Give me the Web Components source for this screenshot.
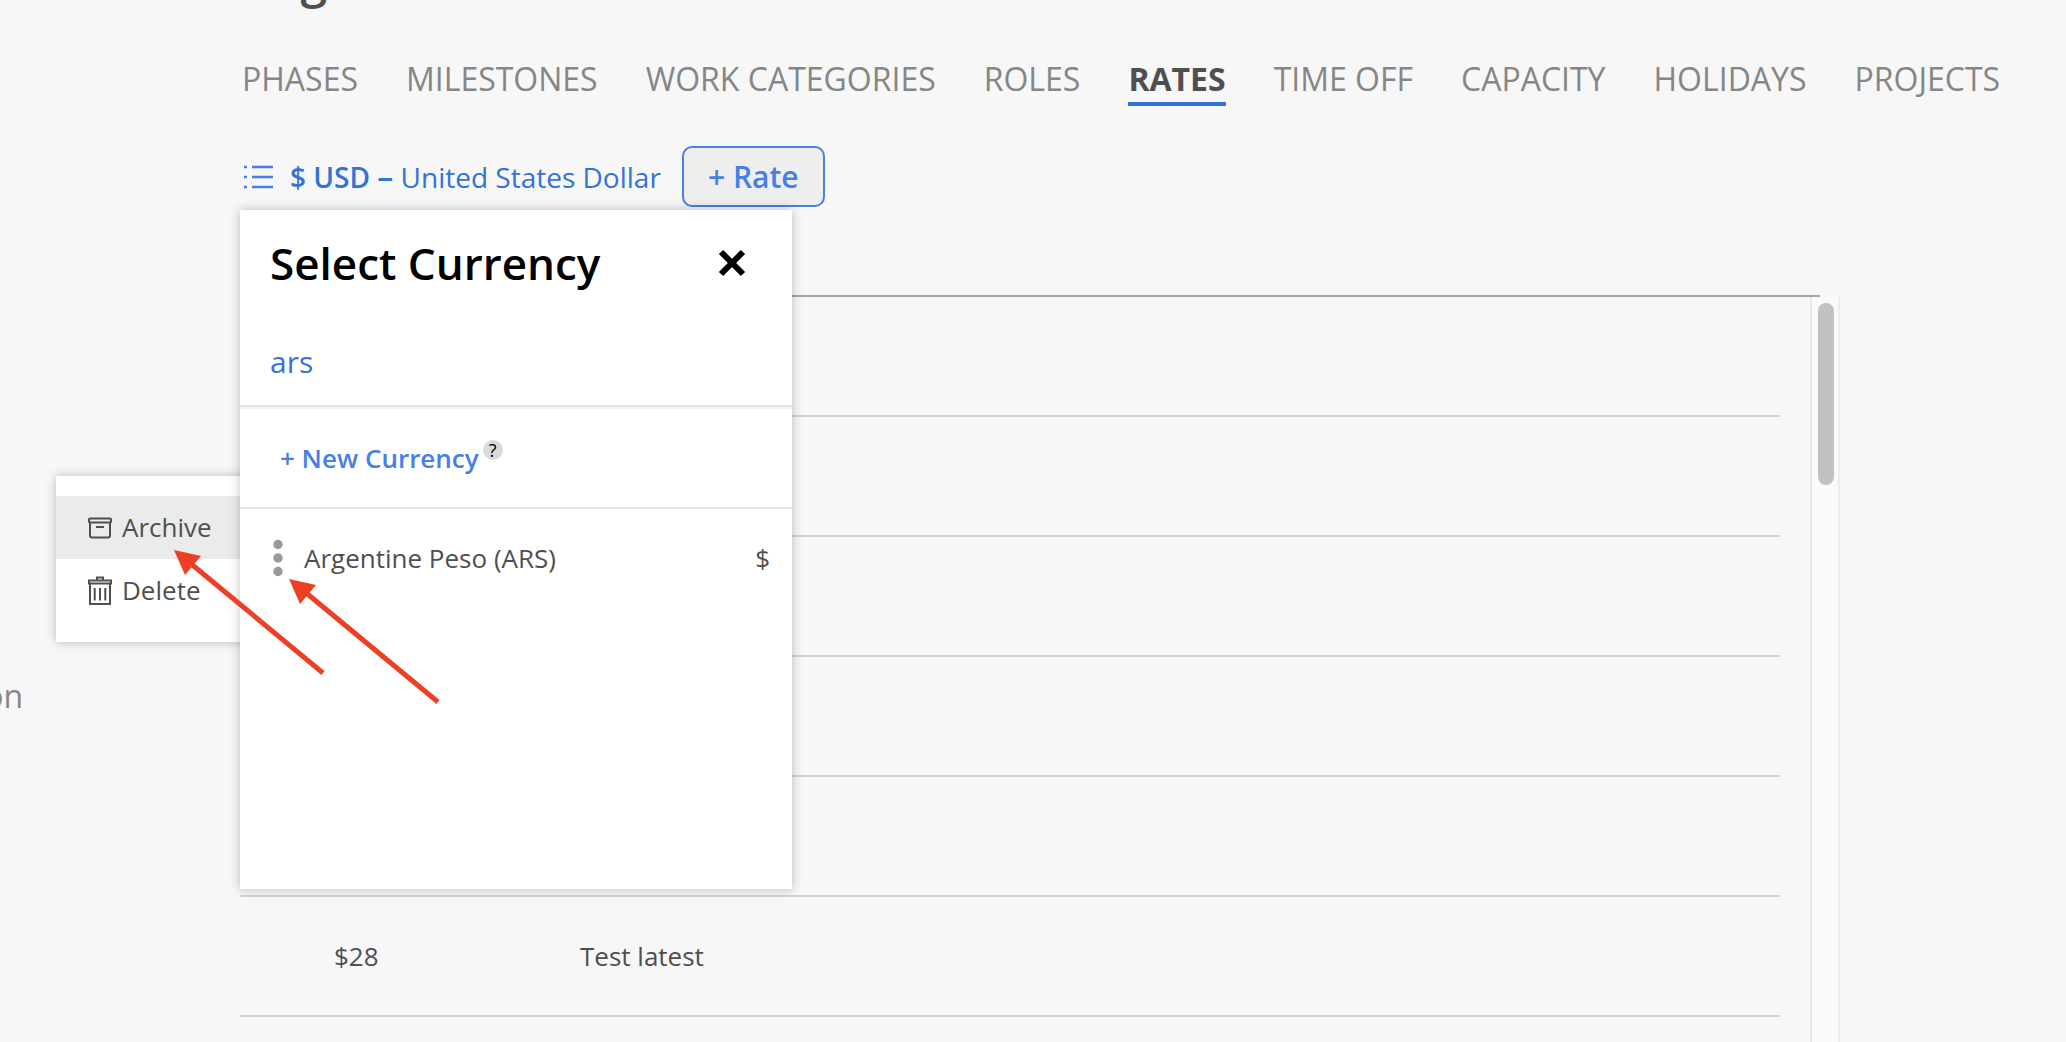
<!DOCTYPE html>
<html lang="en">
<head>
<meta charset="utf-8">
<title>Rates</title>
<style>
  body {
    margin: 0;
    background: #f7f7f7;
    color: #4f4f4f;
    font-family: "Open Sans", "Noto Sans", sans-serif;
    font-size: 26px;
    line-height: 36px;
  }
</style>
</head>
<body>
<rates-page></rates-page>

<script>
class TabNav extends HTMLElement {
  constructor() {
    super();
    this.attachShadow({ mode: 'open' });
  }

  connectedCallback() {
    const active = this.getAttribute('active');
    const tabs = this.getAttribute('tabs').split(',');

    this.shadowRoot.innerHTML = `
      <style>
        :host { display: block; }
        nav {
          display: flex;
          gap: 48px;
          white-space: nowrap;
        }
        a {
          color: #868686;
          font-size: 32px;
          line-height: 44px;
          padding-bottom: 1px;
          border-bottom: 4px solid transparent;
          text-decoration: none;
        }
        a[aria-current] {
          color: #4f4f4f;
          font-weight: 700;
          border-color: #3273d6;
        }
      </style>
      <nav>
        ${tabs.map((tab) => `<a href="#"${tab === active ? ' aria-current="page"' : ''}>${tab}</a>`).join('')}
      </nav>
    `;
  }
}

class RateTable extends HTMLElement {
  constructor() {
    super();
    this.attachShadow({ mode: 'open' });
  }

  connectedCallback() {
    const rows = [['', ''], ['', ''], ['', ''], ['', ''], ['', ''], ['$28', 'Test latest'], ['', '']];

    this.shadowRoot.innerHTML = `
      <style>
        :host { display: block; }
        .line {
          height: 2px;
          margin-right: 20px;
          background: #a5a5a5;
        }
        .body { display: flex; }
        .rows {
          flex: 1;
          padding-right: 30px;
        }
        table {
          width: 100%;
          border-collapse: separate;
          border-spacing: 0;
          table-layout: fixed;
        }
        td {
          box-sizing: border-box;
          height: 120px;
          padding: 0;
          border-bottom: 2px solid #d3d3d3;
        }
        .rate {
          width: 340px;
          padding-left: 94px;
        }
        .track {
          box-sizing: border-box;
          width: 30px;
          padding: 6px;
          background: #fafafa;
          border-left: 2px solid #e8e8e8;
          border-right: 2px solid #ededed;
        }
        .thumb {
          width: 16px;
          height: 182px;
          border-radius: 8px;
          background: #c1c1c1;
        }
      </style>
      <div class="line"></div>
      <div class="body">
        <div class="rows">
          <table>
            ${rows.map(([rate, name]) => `<tr><td class="rate">${rate}</td><td>${name}</td></tr>`).join('')}
          </table>
        </div>
        <div class="track"><div class="thumb"></div></div>
      </div>
    `;
  }
}

class CurrencyMenu extends HTMLElement {
  constructor() {
    super();
    this.attachShadow({ mode: 'open' });
    this.shadowRoot.innerHTML = `
      <style>
        :host {
          display: block;
          box-sizing: border-box;
          padding: 20px 0;
          background: #fff;
          box-shadow: 0 0 10px rgba(0, 0, 0, 0.25);
        }
        button {
          display: flex;
          align-items: center;
          gap: 10px;
          width: 100%;
          height: 63px;
          padding: 0 32px 2px;
          border: 0;
          background: none;
          color: inherit;
          font: inherit;
        }
        button.selected { background: #ebebeb; }
      </style>
      <button class="selected">
        <svg width="24" height="30" viewBox="0 0 24 30" fill="none" stroke="#4f4f4f" stroke-width="2">
          <rect x="1" y="6.500" width="22" height="4" rx="1"/>
          <path d="M2 10.500v13q0 2 2 2h16q2 0 2-2v-13M8 15h8"/>
        </svg>
        Archive
      </button>
      <button>
        <svg width="24" height="30" viewBox="0 0 24 30" fill="none" stroke="#4f4f4f" stroke-width="2">
          <path d="M9 5.500v-3h6v3"/>
          <rect x="1" y="5.500" width="22" height="3"/>
          <path d="M2 8.500V29h20V8.500M6.700 13v12.500M12 13v12.500M17.300 13v12.500"/>
        </svg>
        Delete
      </button>
    `;
  }
}

class CurrencyPicker extends HTMLElement {
  constructor() {
    super();
    this.attachShadow({ mode: 'open' });
    this.shadowRoot.innerHTML = `
      <style>
        :host {
          display: block;
          box-sizing: border-box;
          background: #fff;
          box-shadow: 0 0 10px rgba(0, 0, 0, 0.25);
        }
        header {
          display: flex;
          align-items: center;
          justify-content: space-between;
          padding: 23px 46px 25px 30px;
        }
        h2 {
          margin: 0;
          color: #000;
          font-size: 44px;
          font-weight: 600;
          line-height: 60px;
        }
        button {
          padding: 0;
          border: 0;
          background: none;
          color: inherit;
          font: inherit;
        }
        .close { display: flex; }
        input {
          display: block;
          box-sizing: border-box;
          width: 100%;
          height: 87px;
          padding: 0 30px;
          border: 0;
          outline: 0;
          background: none;
          color: #3273d6;
          font: inherit;
          font-size: 30px;
        }
        .new {
          display: flex;
          gap: 4px;
          padding: 33px 40px 31px;
          border-top: 2px solid #e5e5e5;
          border-bottom: 2px solid #e5e5e5;
          box-shadow: inset 0 2px #f0f0f0;
        }
        .new button {
          color: #467fe6;
          font-weight: 600;
        }
        .help {
          width: 20px;
          height: 20px;
          border-radius: 50%;
          background: #dadada;
          color: #000;
          font-size: 18px;
          line-height: 20px;
          text-align: center;
        }
        .item {
          display: flex;
          align-items: center;
          padding: 30px 22px 30px 32px;
        }
        .dots {
          display: flex;
          margin-right: 20px;
        }
        .name { flex: 1; }
      </style>
      <header>
        <h2>Select Currency</h2>
        <button class="close" aria-label="Close">
          <svg width="28" height="28" viewBox="0 0 28 28" stroke="#000" stroke-width="6">
            <path d="M3 3l22 22M25 3L3 25"/>
          </svg>
        </button>
      </header>
      <input type="text" value="ars" aria-label="Search currency">
      <div class="new">
        <button>+ New Currency</button>
        <span class="help">?</span>
      </div>
      <div class="item">
        <button class="dots" aria-label="Currency actions">
          <svg width="12" height="38" viewBox="0 0 12 38" fill="#999">
            <circle cx="6" cy="5.500" r="4.700"/>
            <circle cx="6" cy="19" r="4.700"/>
            <circle cx="6" cy="32.500" r="4.700"/>
          </svg>
        </button>
        <span class="name">Argentine Peso (ARS)</span>
        <span>$</span>
      </div>
    `;
  }
}

class RatesPage extends HTMLElement {
  constructor() {
    super();
    this.attachShadow({ mode: 'open' });
    this.shadowRoot.innerHTML = `
      <style>
        :host {
          display: block;
          position: relative;
          height: 100vh;
          overflow: hidden;
        }
        .layout {
          display: grid;
          grid-template-columns: 240px 1fr;
        }
        aside {
          padding-top: 674px;
          width: 23px;
          display: flex;
          justify-content: flex-end;
          color: #868686;
          font-size: 32px;
          line-height: 44px;
        }
        main { min-width: 0; }
        h1 {
          height: 57px;
          margin: 0;
          padding-left: 2px;
          display: flex;
          align-items: flex-end;
          font-size: 48px;
          font-weight: 600;
          line-height: 64px;
        }
        h1 span { margin-bottom: 46px; }
        tab-nav { padding-left: 2px; }
        .toolbar {
          display: flex;
          align-items: center;
          padding: 40px 0 88px 3px;
          white-space: nowrap;
        }
        button {
          border: 0;
          padding: 0;
          background: none;
          color: #3273d6;
          font: inherit;
          font-size: 28px;
        }
        .currency {
          display: flex;
          align-items: center;
          gap: 16px;
          margin-right: 21px;
        }
        b { font-weight: 600; }
        .dash {
          font-size: 32px;
          line-height: 32px;
        }
        .add {
          box-sizing: border-box;
          width: 143px;
          height: 61px;
          border: 2px solid #467fe6;
          border-radius: 10px;
          background: #eee;
          color: #467fe6;
          font-size: 30px;
          font-weight: 600;
        }
        rate-table { margin-right: 226px; }
        currency-menu {
          position: absolute;
          top: 476px;
          left: 56px;
          width: 200px;
        }
        currency-picker {
          position: absolute;
          top: 210px;
          left: 240px;
          width: 552px;
          height: 679px;
        }
        .arrows {
          position: absolute;
          top: 540px;
          left: 160px;
        }
      </style>
      <div class="layout">
        <aside><span>Organization</span></aside>
        <main>
          <h1><span>Organization</span></h1>
          <tab-nav active="RATES" tabs="PHASES,MILESTONES,WORK CATEGORIES,ROLES,RATES,TIME OFF,CAPACITY,HOLIDAYS,PROJECTS"></tab-nav>
          <div class="toolbar">
            <button class="currency">
              <svg width="31" height="24" viewBox="0 0 31 24" stroke="#467fe6" stroke-width="2.500">
                <path d="M9 2h21M9 12h21M9 22h21M1 2h3M1 12h3M1 22h3"/>
              </svg>
              <span><b>$ USD <span class="dash">–</span></b> United States Dollar</span>
            </button>
            <button class="add">+ Rate</button>
          </div>
          <rate-table></rate-table>
        </main>
      </div>
      <currency-menu></currency-menu>
      <currency-picker></currency-picker>
      <svg class="arrows" width="290" height="180" viewBox="160 540 290 180" fill="#ec4024" stroke="#ec4024">
        <path d="M190 563L323 673M305 592L438 702" stroke-width="5"/>
        <path d="M174 550l27 6-16 19zM289 579l27 6-16 19z" stroke="none"/>
      </svg>
    `;
  }
}

customElements.define('tab-nav', TabNav);
customElements.define('rate-table', RateTable);
customElements.define('currency-menu', CurrencyMenu);
customElements.define('currency-picker', CurrencyPicker);
customElements.define('rates-page', RatesPage);
</script>
</body>
</html>
